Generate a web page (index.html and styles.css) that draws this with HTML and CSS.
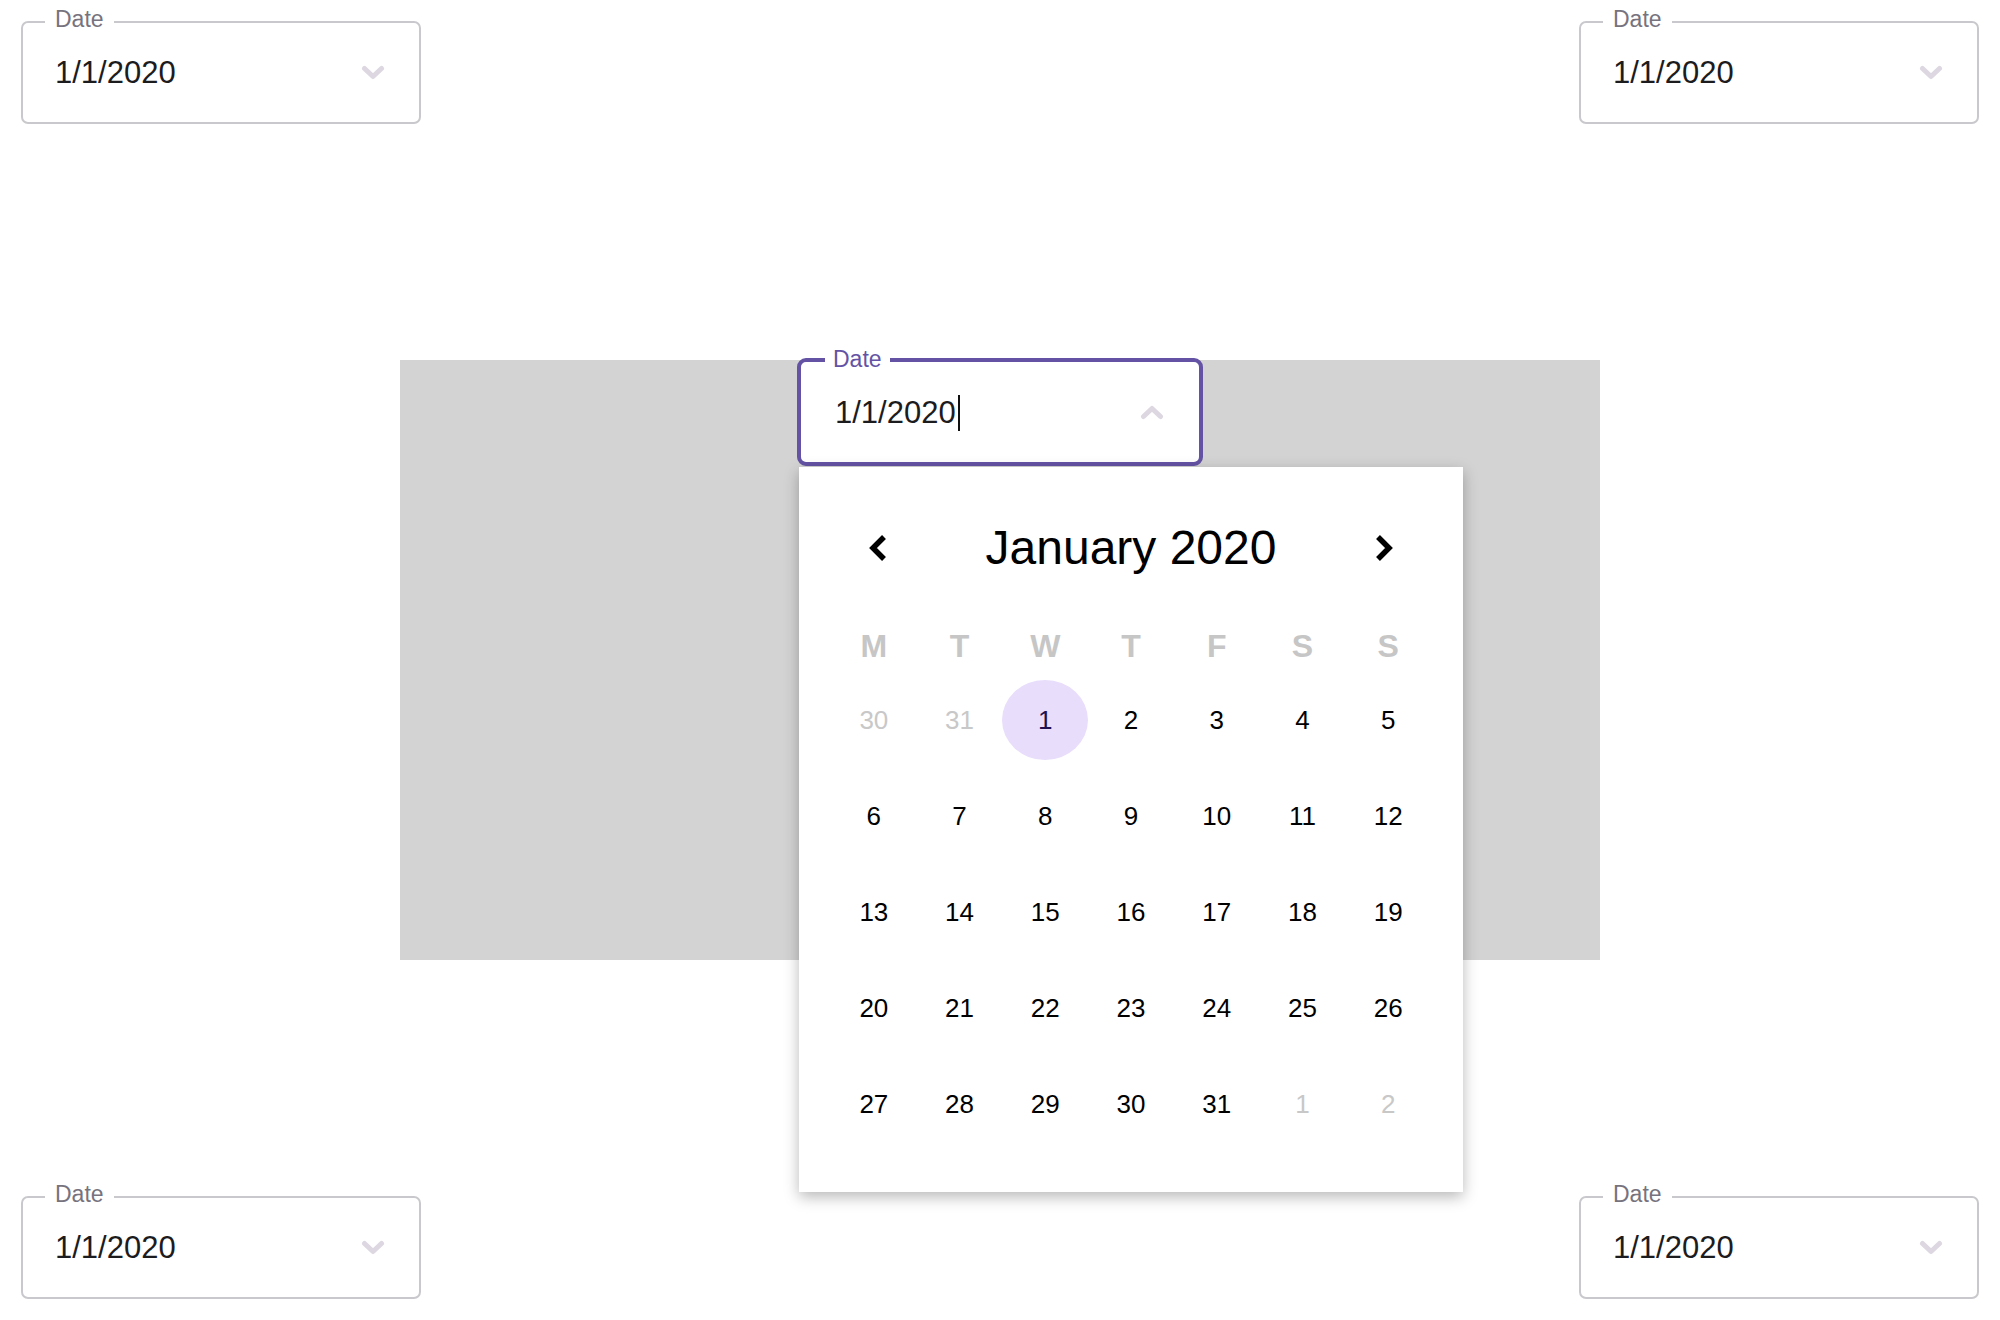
FILE: index.html
```html
<!DOCTYPE html>
<html lang="en">
<head>
<meta charset="utf-8">
<title>Date pickers</title>
<link rel="stylesheet" href="styles.css">
</head>
<body>
<div class="row">
  <div class="field">
    <span class="label">Date</span>
    <span class="value">1/1/2020</span>
    <svg class="chev" width="24" height="16" viewBox="0 0 24 16"><polyline points="3.5,3.5 12,11.5 20.5,3.5" /></svg>
  </div>
  <div class="field">
    <span class="label">Date</span>
    <span class="value">1/1/2020</span>
    <svg class="chev" width="24" height="16" viewBox="0 0 24 16"><polyline points="3.5,3.5 12,11.5 20.5,3.5" /></svg>
  </div>
</div>

<div class="stage">
  <div class="picker">
    <div class="field focused">
      <span class="label">Date</span>
      <span class="value">1/1/2020<span class="caret"></span></span>
      <svg class="chev" width="24" height="16" viewBox="0 0 24 16"><polyline points="3.5,12.5 12,4.5 20.5,12.5" /></svg>
    </div>
    <div class="popup">
      <div class="cal-head">
        <svg class="nav" width="18" height="28" viewBox="0 0 18 28"><polyline points="15,3 4,14 15,25" /></svg>
        <div class="month">January 2020</div>
        <svg class="nav" width="18" height="28" viewBox="0 0 18 28"><polyline points="3,3 14,14 3,25" /></svg>
      </div>
      <div class="weekdays">
        <span>M</span><span>T</span><span>W</span><span>T</span><span>F</span><span>S</span><span>S</span>
      </div>
      <div class="days">
        <span class="out">30</span><span class="out">31</span><span class="sel">1</span><span>2</span><span>3</span><span>4</span><span>5</span>
        <span>6</span><span>7</span><span>8</span><span>9</span><span>10</span><span>11</span><span>12</span>
        <span>13</span><span>14</span><span>15</span><span>16</span><span>17</span><span>18</span><span>19</span>
        <span>20</span><span>21</span><span>22</span><span>23</span><span>24</span><span>25</span><span>26</span>
        <span>27</span><span>28</span><span>29</span><span>30</span><span>31</span><span class="out">1</span><span class="out">2</span>
      </div>
    </div>
  </div>
</div>

<div class="row">
  <div class="field">
    <span class="label">Date</span>
    <span class="value">1/1/2020</span>
    <svg class="chev" width="24" height="16" viewBox="0 0 24 16"><polyline points="3.5,3.5 12,11.5 20.5,3.5" /></svg>
  </div>
  <div class="field">
    <span class="label">Date</span>
    <span class="value">1/1/2020</span>
    <svg class="chev" width="24" height="16" viewBox="0 0 24 16"><polyline points="3.5,3.5 12,11.5 20.5,3.5" /></svg>
  </div>
</div>
</body>
</html>
```

FILE: styles.css
```css
* { box-sizing: border-box; }

html, body {
  margin: 0;
  background: #ffffff;
}

body {
  width: 2000px;
  height: 1320px;
  padding: 21px;
  display: flex;
  flex-direction: column;
  justify-content: space-between;
  font-family: "Liberation Sans", Arial, Helvetica, sans-serif;
  color: #000;
}

.row {
  display: flex;
  justify-content: space-between;
}

.field {
  position: relative;
  width: 400px;
  height: 103px;
  border: 2px solid #c9c8cc;
  border-radius: 7px;
  background: #fff;
  display: flex;
  align-items: center;
  justify-content: space-between;
  padding: 0 34px 0 32px;
}

.label {
  position: absolute;
  top: -15px;
  left: 22px;
  padding: 0 10px;
  background: #fff;
  font-size: 23px;
  line-height: 23px;
  color: #77737e;
}

.value {
  font-size: 31px;
  line-height: 36px;
  color: #1c1c1e;
  display: flex;
  align-items: center;
  margin-top: 1px;
}

.caret {
  display: inline-block;
  width: 2px;
  height: 36px;
  background: #111;
  margin-left: 2px;
}

.chev polyline {
  fill: none;
  stroke: #ddd7e1;
  stroke-width: 5;
  stroke-linecap: round;
  stroke-linejoin: round;
}

.stage {
  width: 1200px;
  height: 600px;
  align-self: center;
  background: #d3d3d3;
  display: flex;
  justify-content: center;
  align-items: flex-start;
}

.picker {
  position: relative;
  margin-top: -2px;
}

.field.focused {
  width: 406px;
  height: 108px;
  border: 4px solid #6453a4;
  border-radius: 9px;
  padding: 0 35px 0 34px;
}

.field.focused .label {
  top: -14px;
  left: 24px;
  padding: 0 8px;
  color: #6453a4;
}

.popup {
  position: absolute;
  top: calc(100% + 1px);
  left: 2px;
  width: 664px;
  height: 725px;
  background: #fff;
  box-shadow: 0 5px 14px rgba(0, 0, 0, 0.28);
  padding: 51px 32px 48px;
  z-index: 2;
}

.cal-head {
  height: 60px;
  padding: 0 38px;
  display: flex;
  align-items: center;
  justify-content: space-between;
}

.nav polyline {
  fill: none;
  stroke: #000;
  stroke-width: 5.5;
  stroke-linecap: butt;
  stroke-linejoin: miter;
}

.month {
  font-size: 48px;
  line-height: 60px;
  color: #000;
}

.weekdays {
  margin-top: 48px;
  display: grid;
  grid-template-columns: repeat(7, 1fr);
  height: 40px;
}

.weekdays span {
  text-align: center;
  font-size: 32px;
  line-height: 40px;
  font-weight: bold;
  color: #c6c6c6;
}

.days {
  margin-top: 14px;
  display: grid;
  grid-template-columns: repeat(7, 1fr);
  grid-auto-rows: 80px;
  row-gap: 16px;
}

.days span {
  display: flex;
  align-items: center;
  justify-content: center;
  font-size: 26px;
  color: #000;
  border-radius: 50%;
}

.days span.out {
  color: #c8c8c8;
}

.days span.sel {
  background: #e8ddfb;
  color: #1f1050;
}
```
